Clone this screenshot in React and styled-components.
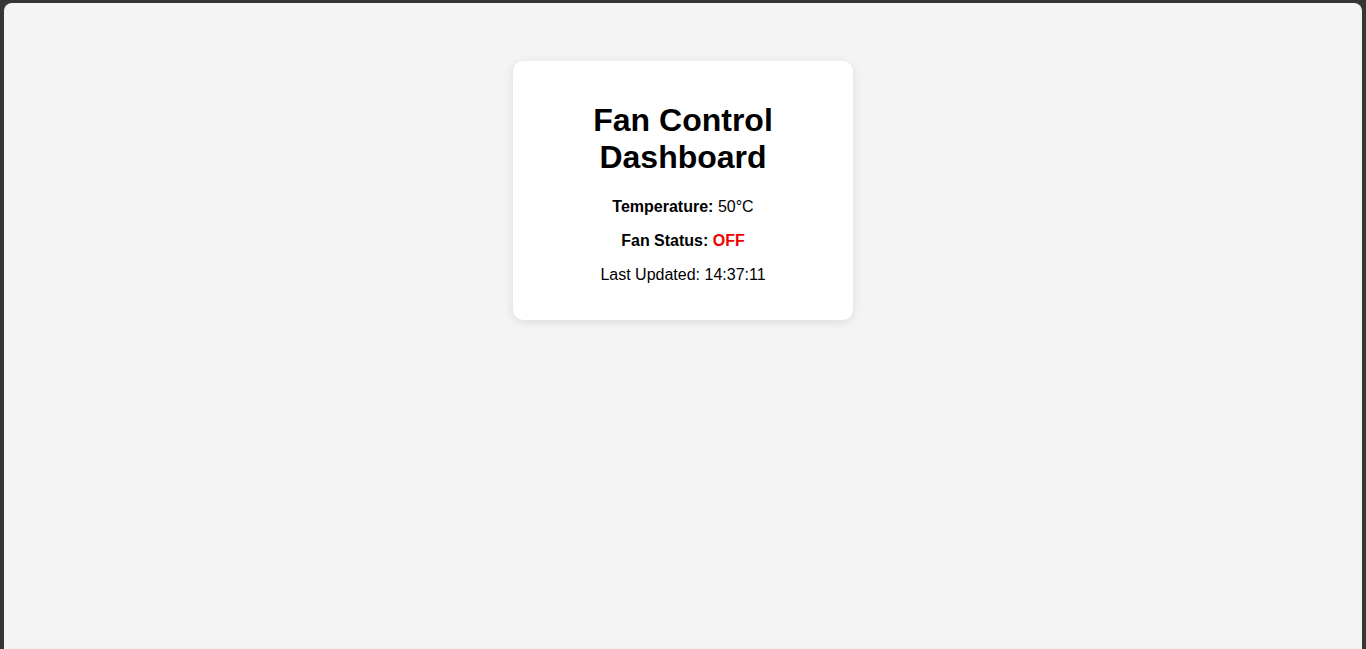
import React from "react";
import styled, { createGlobalStyle } from "styled-components";

const GlobalStyle = createGlobalStyle`
  html, body {
    margin: 0;
    padding: 0;
    background-color: #363636;
  }
`;

const Frame = styled.div`
  box-sizing: border-box;
  height: 649px;
  padding: 3px 4px 0;
  background-color: #363636;
  overflow: hidden;
`;

const Screen = styled.div`
  box-sizing: border-box;
  height: 100%;
  padding: 58px 20px 0;
  background-color: #f4f4f4;
  border-radius: 8px 8px 0 0;
  text-align: center;
  font-family: "Liberation Sans", Arial, sans-serif;
  color: #000;
`;

const Card = styled.div`
  display: inline-block;
  width: 300px;
  padding: 20px;
  background-color: #fff;
  border-radius: 10px;
  box-shadow: 0 2px 10px rgba(0, 0, 0, 0.1);
`;

const Title = styled.h1`
  font-size: 32px;
  font-weight: bold;
  margin: 21.44px 0;
`;

const Reading = styled.p`
  font-size: 16px;
  margin: 16px 0;
  strong {
    font-weight: bold;
  }
`;

const Status = styled.span`
  font-weight: bold;
  color: ${props => (props.$on ? "#1a9c2e" : "#f00000")};
`;

export default function App() {
  const data = { temperature: 50, fanOn: false, updated: "14:37:11" };
  return (
    <Frame>
      <GlobalStyle />
      <Screen>
        <Card>
          <Title>Fan Control Dashboard</Title>
          <Reading>
            <strong>Temperature:</strong> {data.temperature}°C
          </Reading>
          <Reading>
            <strong>Fan Status:</strong>{" "}
            <Status $on={data.fanOn}>{data.fanOn ? "ON" : "OFF"}</Status>
          </Reading>
          <Reading>Last Updated: {data.updated}</Reading>
        </Card>
      </Screen>
    </Frame>
  );
}
